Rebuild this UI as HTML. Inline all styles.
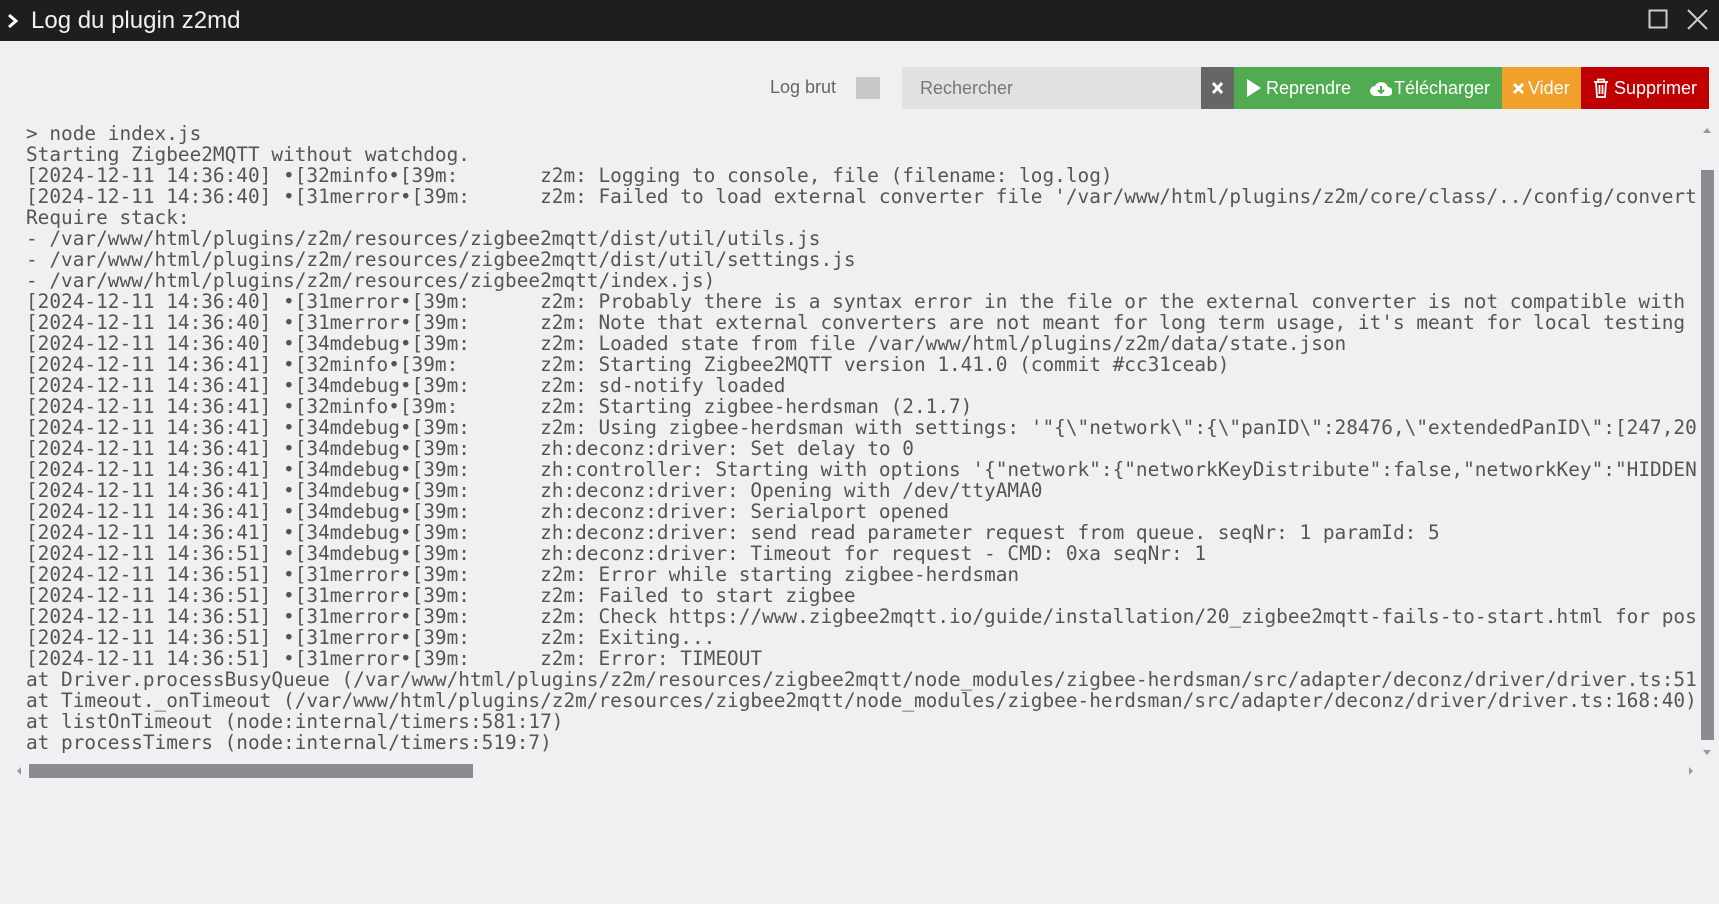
<!DOCTYPE html>
<html><head><meta charset="utf-8"><style>
*{margin:0;padding:0;box-sizing:border-box}
body{width:1719px;height:904px;background:#eff0f2;overflow:hidden;position:relative;font-family:"Liberation Sans",sans-serif}
.title{position:absolute;left:0;top:0;width:1719px;height:41px;background:#1e1e1e;color:#f0f0f0;font-size:24px;line-height:41px}
.title .t{position:absolute;left:31px;top:0}
.lb{position:absolute;left:770px;top:77px;font-size:18px;color:#666}
.cb{position:absolute;left:856px;top:77px;width:24px;height:22px;background:#c8c8c8}
.srch{position:absolute;left:902px;top:67px;width:299px;height:42px;background:#e0e1e1;color:#777;font-size:18px;line-height:43px;padding-left:18px}
.btn{position:absolute;top:67px;height:42px;color:#fff;font-size:18px;line-height:43px;white-space:nowrap}
pre{position:absolute;left:26px;top:123px;width:1671px;overflow:hidden;font-family:"DejaVu Sans Mono","Liberation Mono",monospace;font-size:19.42px;line-height:21px;color:#555;letter-spacing:0}
</style></head><body>
<div class="title"><svg style="position:absolute;left:7px;top:13px" width="12" height="16" viewBox="0 0 12 16"><path d="M2 2l7 6-7 6" stroke="#fff" stroke-width="3" fill="none"/></svg><span class="t">Log du plugin z2md</span>
<svg style="position:absolute;left:1648px;top:9px" width="20" height="20"><rect x="1.5" y="1.5" width="17" height="17" fill="none" stroke="#ccc" stroke-width="2"/></svg>
<svg style="position:absolute;left:1687px;top:9px" width="21" height="21"><path d="M1 1L20 20M20 1L1 20" stroke="#ccc" stroke-width="2"/></svg></div>
<div class="lb">Log brut</div><div class="cb"></div>
<div class="srch">Rechercher</div>
<div class="btn" style="left:1201px;width:33px;background:#666"><svg style="position:absolute;left:10px;top:14px" width="13" height="14"><path d="M2 2l9 10M11 2L2 12" stroke="#fff" stroke-width="3"/></svg></div>
<div class="btn" style="left:1234px;width:268px;background:#51ac51"><svg style="position:absolute;left:13px;top:12px" width="14" height="18"><path d="M0 0L14 9L0 18Z" fill="#fff"/></svg><span style="position:absolute;left:32px">Reprendre</span><svg style="position:absolute;left:136px;top:12px" width="22" height="18"><path d="M5 17a5 5 0 0 1 0-10a7 7 0 0 1 13 1a4.5 4.5 0 0 1 0 9z" fill="#fff"/><path d="M11 7v7M8 11l3 3 3-3" stroke="#51ac51" stroke-width="2" fill="none"/></svg><span style="position:absolute;left:160px">Télécharger</span></div>
<div class="btn" style="left:1502px;width:79px;background:#f0a12c"><svg style="position:absolute;left:10px;top:15px" width="13" height="13"><path d="M2 2l9 9M11 2L2 11" stroke="#fff" stroke-width="3"/></svg><span style="position:absolute;left:26px">Vider</span></div>
<div class="btn" style="left:1581px;width:128px;background:#c00000"><svg style="position:absolute;left:12px;top:11px" width="16" height="20"><path d="M1 4h14M5 4V1.5h6V4M3 4l1 15h8l1-15M6.5 7v9M9.5 7v9" stroke="#fff" stroke-width="1.8" fill="none"/></svg><span style="position:absolute;left:33px">Supprimer</span></div>
<pre>&gt; node index.js
Starting Zigbee2MQTT without watchdog.
[2024-12-11 14:36:40] •[32minfo•[39m:       z2m: Logging to console, file (filename: log.log)
[2024-12-11 14:36:40] •[31merror•[39m:      z2m: Failed to load external converter file '/var/www/html/plugins/z2m/core/class/../config/converters
Require stack:
- /var/www/html/plugins/z2m/resources/zigbee2mqtt/dist/util/utils.js
- /var/www/html/plugins/z2m/resources/zigbee2mqtt/dist/util/settings.js
- /var/www/html/plugins/z2m/resources/zigbee2mqtt/index.js)
[2024-12-11 14:36:40] •[31merror•[39m:      z2m: Probably there is a syntax error in the file or the external converter is not compatible with
[2024-12-11 14:36:40] •[31merror•[39m:      z2m: Note that external converters are not meant for long term usage, it's meant for local testing
[2024-12-11 14:36:40] •[34mdebug•[39m:      z2m: Loaded state from file /var/www/html/plugins/z2m/data/state.json
[2024-12-11 14:36:41] •[32minfo•[39m:       z2m: Starting Zigbee2MQTT version 1.41.0 (commit #cc31ceab)
[2024-12-11 14:36:41] •[34mdebug•[39m:      z2m: sd-notify loaded
[2024-12-11 14:36:41] •[32minfo•[39m:       z2m: Starting zigbee-herdsman (2.1.7)
[2024-12-11 14:36:41] •[34mdebug•[39m:      z2m: Using zigbee-herdsman with settings: '"{\"network\":{\"panID\":28476,\"extendedPanID\":[247,20
[2024-12-11 14:36:41] •[34mdebug•[39m:      zh:deconz:driver: Set delay to 0
[2024-12-11 14:36:41] •[34mdebug•[39m:      zh:controller: Starting with options '{"network":{"networkKeyDistribute":false,"networkKey":"HIDDEN
[2024-12-11 14:36:41] •[34mdebug•[39m:      zh:deconz:driver: Opening with /dev/ttyAMA0
[2024-12-11 14:36:41] •[34mdebug•[39m:      zh:deconz:driver: Serialport opened
[2024-12-11 14:36:41] •[34mdebug•[39m:      zh:deconz:driver: send read parameter request from queue. seqNr: 1 paramId: 5
[2024-12-11 14:36:51] •[34mdebug•[39m:      zh:deconz:driver: Timeout for request - CMD: 0xa seqNr: 1
[2024-12-11 14:36:51] •[31merror•[39m:      z2m: Error while starting zigbee-herdsman
[2024-12-11 14:36:51] •[31merror•[39m:      z2m: Failed to start zigbee
[2024-12-11 14:36:51] •[31merror•[39m:      z2m: Check https://www.zigbee2mqtt.io/guide/installation/20_zigbee2mqtt-fails-to-start.html for possible
[2024-12-11 14:36:51] •[31merror•[39m:      z2m: Exiting...
[2024-12-11 14:36:51] •[31merror•[39m:      z2m: Error: TIMEOUT
at Driver.processBusyQueue (/var/www/html/plugins/z2m/resources/zigbee2mqtt/node_modules/zigbee-herdsman/src/adapter/deconz/driver/driver.ts:51
at Timeout._onTimeout (/var/www/html/plugins/z2m/resources/zigbee2mqtt/node_modules/zigbee-herdsman/src/adapter/deconz/driver/driver.ts:168:40)
at listOnTimeout (node:internal/timers:581:17)
at processTimers (node:internal/timers:519:7)</pre>
<div style="position:absolute;left:1701px;top:170px;width:13px;height:570px;background:#8b8b93"></div>
<div style="position:absolute;left:1703px;top:128px;border:4px solid transparent;border-bottom:5px solid #999;border-top:0"></div>
<div style="position:absolute;left:1703px;top:750px;border:4px solid transparent;border-top:5px solid #999;border-bottom:0"></div>
<div style="position:absolute;left:29px;top:764px;width:444px;height:14px;background:#8b8b93"></div>
<div style="position:absolute;left:17px;top:767px;border:4px solid transparent;border-right:4px solid #999;border-left:0"></div>
<div style="position:absolute;left:1689px;top:767px;border:4px solid transparent;border-left:4px solid #999;border-right:0"></div>
</body></html>
